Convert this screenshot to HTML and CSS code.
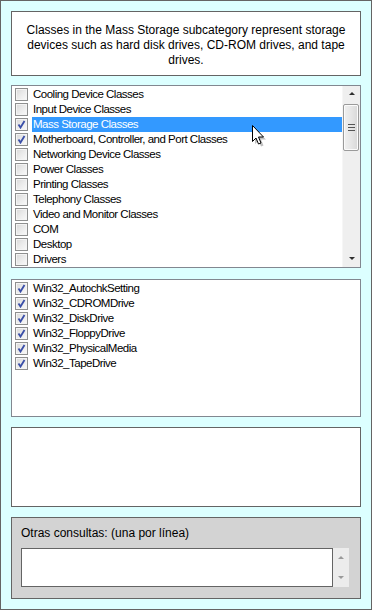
FILE: index.html
```html
<!DOCTYPE html>
<html lang="en">
<head>
    <meta charset="UTF-8">
    <meta name="viewport" content="width=device-width, initial-scale=1.0">
    <title>WMI Classes</title>
    <link rel="stylesheet" href="styles.css">
</head>
<body>
    <div id="window">
        <div id="description">
            Classes in the Mass Storage subcategory represent storage devices such as hard disk drives, CD-ROM drives, and tape drives.
        </div>

        <div id="categories" class="list">
            <div class="items">
                <div class="item"><span class="box"></span><span class="label">Cooling Device Classes</span></div>
                <div class="item"><span class="box"></span><span class="label">Input Device Classes</span></div>
                <div class="item selected"><span class="box checked"></span><span class="label">Mass Storage Classes</span></div>
                <div class="item"><span class="box checked"></span><span class="label">Motherboard, Controller, and Port Classes</span></div>
                <div class="item"><span class="box"></span><span class="label">Networking Device Classes</span></div>
                <div class="item"><span class="box"></span><span class="label">Power Classes</span></div>
                <div class="item"><span class="box"></span><span class="label">Printing Classes</span></div>
                <div class="item"><span class="box"></span><span class="label">Telephony Classes</span></div>
                <div class="item"><span class="box"></span><span class="label">Video and Monitor Classes</span></div>
                <div class="item"><span class="box"></span><span class="label">COM</span></div>
                <div class="item"><span class="box"></span><span class="label">Desktop</span></div>
                <div class="item"><span class="box"></span><span class="label">Drivers</span></div>
            </div>
            <div class="scrollbar">
                <div class="arrow up"></div>
                <div class="track">
                    <div class="thumb"><span class="grip"></span></div>
                </div>
                <div class="arrow down"></div>
            </div>
            <svg class="cursor" width="16" height="24" viewBox="0 0 16 24">
                <path d="M2.5 3.5 L2.5 18.5 L6 15 L8.5 21 L11 20 L8.5 14 L13.5 14 Z" fill="#000" opacity="0.25" transform="translate(1.5 1.5)"/>
                <path d="M1.5 1.5 L1.5 17.5 L5 14 L7.5 20 L10 19 L7.5 13 L12.5 13 Z" fill="#fff" stroke="#000" stroke-width="1" stroke-linejoin="miter"/>
            </svg>
        </div>

        <div id="classes" class="list">
            <div class="items">
                <div class="item"><span class="box checked"></span><span class="label">Win32_AutochkSetting</span></div>
                <div class="item"><span class="box checked"></span><span class="label">Win32_CDROMDrive</span></div>
                <div class="item"><span class="box checked"></span><span class="label">Win32_DiskDrive</span></div>
                <div class="item"><span class="box checked"></span><span class="label">Win32_FloppyDrive</span></div>
                <div class="item"><span class="box checked"></span><span class="label">Win32_PhysicalMedia</span></div>
                <div class="item"><span class="box checked"></span><span class="label">Win32_TapeDrive</span></div>
            </div>
        </div>

        <div id="output"></div>

        <div id="extra">
            <div class="caption">Otras consultas: (una por línea)</div>
            <div class="query">
                <div class="field"></div>
                <div class="spin">
                    <span class="arrow up"></span>
                    <span class="arrow down"></span>
                </div>
            </div>
        </div>
    </div>
</body>
</html>
```

FILE: styles.css
```css
body {
    margin: 0;
    font-family: "Liberation Sans", Arial, sans-serif;
    font-size: 11px;
    color: #000;
}

#window {
    box-sizing: border-box;
    width: 372px;
    height: 610px;
    background: #dcffff;
    border: 1px solid #646464;
    padding: 10px;
    display: flex;
    flex-direction: column;
}

#description {
    box-sizing: border-box;
    height: 65px;
    background: #fff;
    border: 1px solid #646464;
    padding: 11px 12px 0;
    font-size: 12px;
    line-height: 15px;
    text-align: center;
}

.list {
    box-sizing: border-box;
    background: #fff;
    border: 1px solid #828790;
    display: flex;
    overflow: hidden;
    position: relative;
}

#categories {
    height: 183px;
    margin-top: 9px;
}

#classes {
    height: 139px;
    margin-top: 11px;
}

.items {
    flex: 1;
    padding-top: 1px;
}

.item {
    height: 15px;
    display: flex;
    align-items: center;
    line-height: 15px;
    white-space: nowrap;
    font-size: 11.5px;
    letter-spacing: -0.5px;
}

.box {
    box-sizing: border-box;
    flex: none;
    width: 13px;
    height: 13px;
    margin: 1px 4px 0 3px;
    border: 1px solid #8e8f8f;
    background: linear-gradient(135deg, #d8d8d8 0%, #e9e9e9 45%, #fafafa 100%);
    box-shadow: inset 0 0 0 1px #f4f4f4;
}

.box.checked {
    background:
        url("data:image/svg+xml;utf8,<svg xmlns='http://www.w3.org/2000/svg' width='11' height='11'><path d='M2.5 5.5 L4.5 8.5 L8.5 2' fill='none' stroke='%233a4fa8' stroke-width='1.8'/></svg>") center no-repeat,
        linear-gradient(135deg, #d8d8d8 0%, #e9e9e9 45%, #fafafa 100%);
}

.label {
    flex: 1;
    padding-left: 1px;
    height: 15px;
}

.item.selected .label {
    background: #3399ff;
    color: #fff;
}

.scrollbar {
    flex: none;
    width: 17px;
    background: #efefef;
    display: flex;
    flex-direction: column;
    border-left: 1px solid #f6f6f6;
}

.scrollbar .arrow {
    height: 17px;
    position: relative;
}

.arrow::after {
    content: "";
    position: absolute;
    left: 50%;
    top: 50%;
    margin-left: -3px;
    border-left: 3px solid transparent;
    border-right: 3px solid transparent;
}

.arrow.up::after {
    margin-top: -2px;
    border-bottom: 3px solid #2e2e2e;
}

.arrow.down::after {
    margin-top: -1px;
    border-top: 3px solid #2e2e2e;
}

.track {
    flex: 1;
    padding: 1px 1px 0 0;
}

.thumb {
    box-sizing: border-box;
    height: 47px;
    border: 1px solid #9a9a9a;
    border-radius: 2px;
    background: linear-gradient(90deg, #f0f0f0 0%, #e6e6e6 50%, #d8d8d8 100%);
    box-shadow: inset 0 0 0 1px #fbfbfb;
    display: flex;
    align-items: center;
    justify-content: center;
}

.grip {
    width: 7px;
    height: 7px;
    background: repeating-linear-gradient(180deg, #555 0 1px, transparent 1px 3px);
}

.cursor {
    position: absolute;
    left: 239px;
    top: 38px;
}

#output {
    box-sizing: border-box;
    height: 80px;
    margin-top: 10px;
    background: #fff;
    border: 1px solid #646464;
}

#extra {
    box-sizing: border-box;
    height: 82px;
    margin-top: 10px;
    background: #d3d3d3;
    border: 1px solid #646464;
    padding: 6px 10px 0 9px;
}

.caption {
    height: 18px;
    line-height: 18px;
    font-size: 12px;
}

.query {
    display: flex;
    margin-top: 6px;
    height: 39px;
}

.field {
    box-sizing: border-box;
    width: 312px;
    background: #fff;
    border: 1px solid #646464;
}

.spin {
    width: 16px;
    background: #ececec;
    display: flex;
    flex-direction: column;
}

.spin .arrow {
    flex: 1;
    position: relative;
}

.spin .arrow.up::after {
    border-bottom-color: #9a9a9a;
}

.spin .arrow.down::after {
    border-top-color: #9a9a9a;
}
```
